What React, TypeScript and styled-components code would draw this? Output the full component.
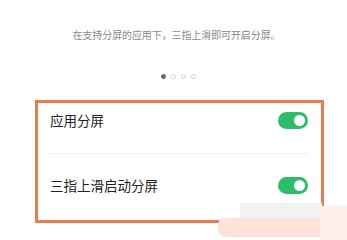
import React from "react";
import styled, { createGlobalStyle } from "styled-components";

const Global = createGlobalStyle`
  html, body {
    margin: 0;
    padding: 0;
    background: #ffffff;
    font-family: "Noto Sans CJK SC", "Noto Sans", sans-serif;
  }
`;

const Page = styled.div`
  position: relative;
  width: 347px;
  height: 240px;
  overflow: hidden;
  background: #fff;
  padding-top: 27px;
  box-sizing: border-box;
`;

const Hint = styled.div`
  font-size: 10px;
  line-height: 16px;
  color: #8a8a8a;
  text-align: center;
  padding-left: 6px;
  letter-spacing: -0.1px;
`;

const Dots = styled.div`
  display: flex;
  gap: 5px;
  justify-content: center;
  margin-top: 31px;
  padding-left: 9px;
  height: 5px;
`;

const Dot = styled.span<{ $active?: boolean }>`
  width: 5px;
  height: 5px;
  border-radius: 50%;
  box-sizing: border-box;
  background: ${(p) => (p.$active ? "#666" : "transparent")};
  border: 1px solid ${(p) => (p.$active ? "#666" : "#d2d2d2")};
`;

const Frame = styled.div`
  margin: 21px 0 0 35px;
  width: 289px;
  box-sizing: border-box;
  border: 3px solid #ec7a4c;
`;

const Row = styled.div<{ $top: number; $bottom: number }>`
  display: flex;
  align-items: center;
  justify-content: space-between;
  padding: ${(p) => p.$top}px 13px ${(p) => p.$bottom}px 12px;
`;

const Label = styled.span`
  font-size: 13.5px;
  line-height: 17px;
  color: #222;
`;

const Divider = styled.div`
  height: 1px;
  margin: 0 13px 0 10px;
  background: #ededed;
`;

const Switch = styled.span`
  display: flex;
  align-items: center;
  justify-content: flex-end;
  width: 30px;
  height: 17px;
  padding-right: 3px;
  box-sizing: border-box;
  border-radius: 9px;
  background: #2cbd6b;
`;

const Knob = styled.span`
  width: 11px;
  height: 11px;
  border-radius: 50%;
  background: #fff;
`;

// watermark-ish smudge over the bottom right corner
const Smudge = styled.div`
  position: absolute;
  left: 218px;
  top: 203px;
  width: 129px;
  height: 37px;
`;

const SmudgeGray = styled.div`
  position: absolute;
  left: 22px;
  top: 0;
  width: 82px;
  height: 15px;
  background: #f1f2f2;
`;

const SmudgePink = styled.div`
  position: absolute;
  left: 0;
  top: 15px;
  width: 104px;
  height: 19px;
  border-radius: 6px 0 0 8px;
  background: #fde3db;
`;

const SmudgeSide = styled.div`
  position: absolute;
  left: 102px;
  top: 3px;
  width: 27px;
  height: 34px;
  background: #feefea;
`;

const Toggle = () => (
  <Switch>
    <Knob />
  </Switch>
);

export default function App() {
  return (
    <Page>
      <Global />
      <Hint>在支持分屏的应用下，三指上滑即可开启分屏。</Hint>
      <Dots>
        <Dot $active />
        <Dot />
        <Dot />
        <Dot />
      </Dots>
      <Frame>
        <Row $top={9} $bottom={24}>
          <Label>应用分屏</Label>
          <Toggle />
        </Row>
        <Divider />
        <Row $top={23} $bottom={26}>
          <Label>三指上滑启动分屏</Label>
          <Toggle />
        </Row>
      </Frame>
      <Smudge>
        <SmudgeGray />
        <SmudgePink />
        <SmudgeSide />
      </Smudge>
    </Page>
  );
}
